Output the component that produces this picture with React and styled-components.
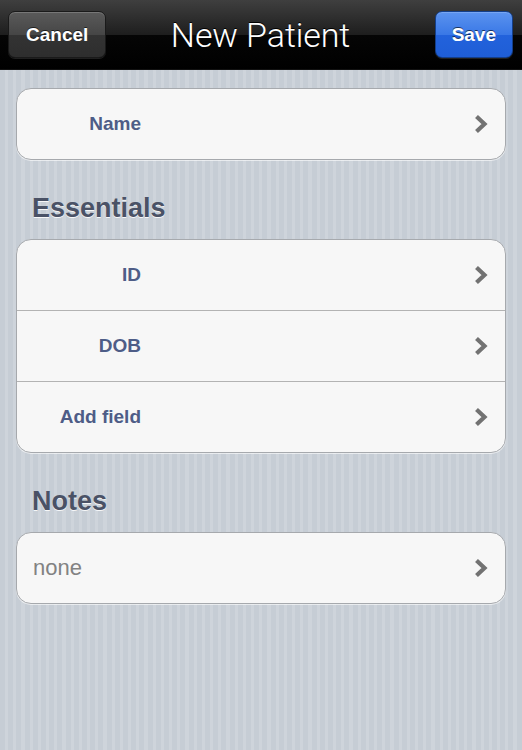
import React from "react"
import styled, { createGlobalStyle } from "styled-components"

const GlobalStyle = createGlobalStyle`
  html, body {
    margin: 0;
    padding: 0;
    background: #c7ced6;
  }
  body {
    font-family: "Liberation Sans", Arial, sans-serif;
  }
`

const Screen = styled.div`
  width: 522px;
  min-height: 750px;
  background: repeating-linear-gradient(
    90deg,
    #c6cdd5 0px,
    #c6cdd5 5px,
    #ced4db 5px,
    #ced4db 8.2px
  );
`

const NavBar = styled.header`
  height: 70px;
  box-sizing: border-box;
  display: grid;
  grid-template-columns: 1fr auto 1fr;
  align-items: center;
  padding: 0 9px 0 8px;
  background: linear-gradient(
    to bottom,
    #3f3f3f 0%,
    #1e1e1e 50%,
    #050505 51%,
    #000 100%
  );
  border-bottom: 1px solid #111;
`

const Title = styled.h1`
  margin: 0;
  font-family: Roboto, "Liberation Sans", sans-serif;
  font-weight: 300;
  font-size: 34px;
  color: #fff;
  letter-spacing: -0.1px;
  text-shadow: 0 -1px 0 #000;
`

const BarButton = styled.button`
  justify-self: ${p => (p.right ? "end" : "start")};
  height: 47px;
  padding: 0 ${p => (p.primary ? "16px" : "17px")};
  border-radius: 7px;
  border: 1px solid ${p => (p.primary ? "#143f8a" : "#1a1a1a")};
  font-family: "Liberation Sans", Arial, sans-serif;
  font-weight: bold;
  font-size: 19px;
  color: #fff;
  text-shadow: 0 -1px 0 rgba(0, 0, 0, 0.6);
  box-shadow: inset 0 1px 0 rgba(255, 255, 255, 0.18),
    0 1px 0 rgba(255, 255, 255, 0.12);
  background: ${p =>
    p.primary
      ? "linear-gradient(to bottom, #5b93ef 0%, #3a78e6 50%, #2262dc 51%, #1f5ed6 100%)"
      : "linear-gradient(to bottom, #5a5a5a 0%, #464646 50%, #333 51%, #2e2e2e 100%)"};
`

const Content = styled.main`
  padding: 18px 16px 40px;
`

const SectionTitle = styled.h2`
  margin: 33px 0 16px 16px;
  font-size: 27px;
  line-height: 30px;
  font-weight: bold;
  color: #4a5266;
  text-shadow: 0 1px 0 rgba(255, 255, 255, 0.85);
`

const Card = styled.section`
  background: #f7f7f7;
  border: 1px solid #a6a9ad;
  border-radius: 15px;
  box-shadow: 0 1px 0 rgba(255, 255, 255, 0.6);
  overflow: hidden;
`

const Row = styled.div`
  height: 70px;
  display: flex;
  align-items: center;
  padding-right: 17px;
  & + & {
    border-top: 1px solid #b3b3b3;
  }
`

const Label = styled.span`
  width: 124px;
  text-align: right;
  font-size: 19px;
  font-weight: bold;
  color: #4e5d87;
`

const Placeholder = styled.span`
  padding-left: 16px;
  font-size: 22px;
  color: #828282;
`

const Spacer = styled.div`
  flex: 1;
`

const Chevron = () => (
  <svg width="14" height="20" viewBox="0 0 14 20">
    <polyline
      points="2.5,2.5 10.5,10 2.5,17.5"
      fill="none"
      stroke="#727272"
      strokeWidth="4.2"
      strokeLinejoin="miter"
    />
  </svg>
)

const FieldRow = ({ label, placeholder }) => (
  <Row>
    {label && <Label>{label}</Label>}
    {placeholder && <Placeholder>{placeholder}</Placeholder>}
    <Spacer />
    <Chevron />
  </Row>
)

const App = () => {
  return (
    <Screen>
      <GlobalStyle />
      <NavBar>
        <BarButton>Cancel</BarButton>
        <Title>New Patient</Title>
        <BarButton primary right>
          Save
        </BarButton>
      </NavBar>
      <Content>
        <Card>
          <FieldRow label="Name" />
        </Card>

        <SectionTitle>Essentials</SectionTitle>
        <Card>
          <FieldRow label="ID" />
          <FieldRow label="DOB" />
          <FieldRow label="Add field" />
        </Card>

        <SectionTitle>Notes</SectionTitle>
        <Card>
          <FieldRow placeholder="none" />
        </Card>
      </Content>
    </Screen>
  )
}

export default App
